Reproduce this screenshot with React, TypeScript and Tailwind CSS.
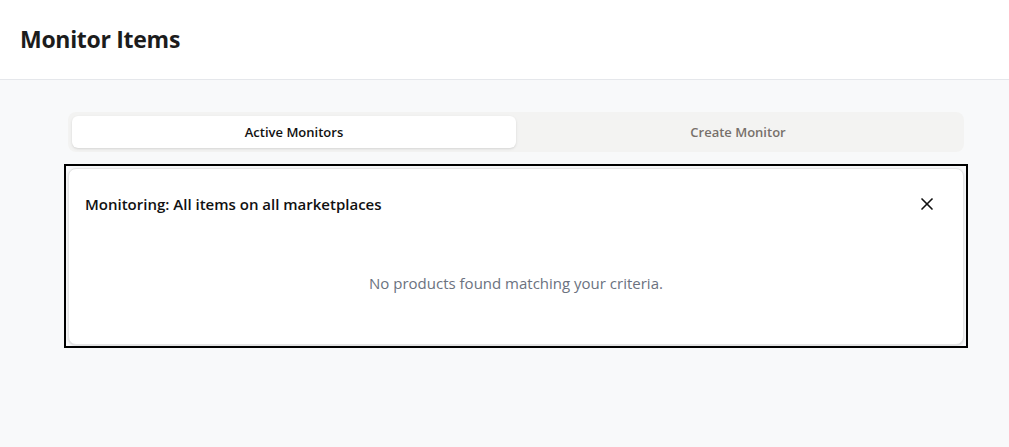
import React from "react";
import { X } from "lucide-react";

export default function App() {
  return (
    <div className="min-h-[447px] bg-[#f8f9fa] font-['Open_Sans',sans-serif] text-[#1a1a1a]">
      <header className="h-[80px] bg-white border-b border-[#e5e7eb] flex items-center px-5">
        <h1 className="text-[23px] font-bold text-[#1c1c1c] tracking-[-0.3px]">Monitor Items</h1>
      </header>
      <main className="pt-[32px] pl-[64px]">
        <div className="w-[904px]">
          <div className="mx-[4px] h-[40px] bg-[#f3f3f2] rounded-lg p-1 grid grid-cols-2">
            <button className="bg-white rounded-md shadow-sm text-[13px] font-semibold text-[#111] pt-px">
              Active Monitors
            </button>
            <button className="text-[13px] font-semibold text-[#77706b] pt-px">Create Monitor</button>
          </div>
          <div className="mt-[12px] border-2 border-black p-[2px] pb-[1px]">
            <div className="bg-white rounded-lg border border-[#e5e5e5] shadow-sm h-[177px] flex flex-col">
              <div className="flex items-center justify-between pl-[16px] pr-[26px] pt-[24px]">
                <h2 className="text-[15px] font-semibold text-[#111]">Monitoring: All items on all marketplaces</h2>
                <X size={20} strokeWidth={2} className="text-[#111]" />
              </div>
              <p className="mt-[56px] text-center text-[15px] text-[#6b7280]">
                No products found matching your criteria.
              </p>
            </div>
          </div>
        </div>
      </main>
    </div>
  );
}
